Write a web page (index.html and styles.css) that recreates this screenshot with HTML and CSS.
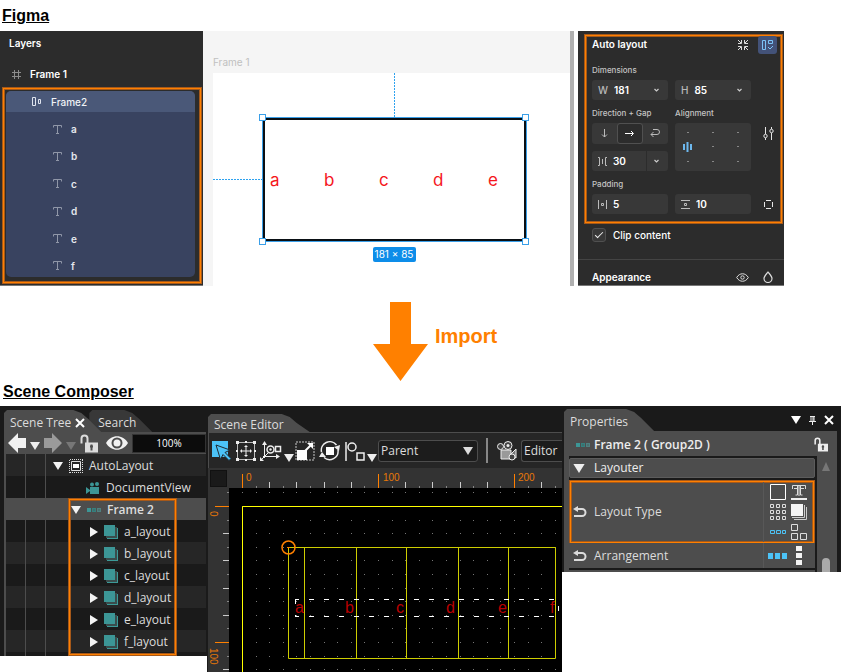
FILE: index.html
```html
<!DOCTYPE html>
<html lang="en">
<head>
<meta charset="utf-8">
<title>Figma import: auto layout</title>
<link rel="stylesheet" href="styles.css">
</head>
<body>
<svg class="defs" aria-hidden="true">
  <symbol id="text-t" viewBox="0 0 9 9"><path d="M.5 2.5V.5h8v2M4.5.5v8M3 8.5h3" fill="none" stroke="currentColor"/></symbol>
  <symbol id="chev" viewBox="0 0 7 5"><path d="M1.5 1 3.5 3l2-2" fill="none" stroke="currentColor" stroke-width="1.2"/></symbol>
  <symbol id="down" viewBox="0 0 10 8"><path d="M0 0h10L5 8z" fill="currentColor"/></symbol>
  <symbol id="right" viewBox="0 0 8 10"><path d="M0 0 8 5 0 10z" fill="currentColor"/></symbol>
  <symbol id="layer" viewBox="0 0 14 14"><path d="M11 3h3v11H3v-3" fill="#3c9a98"/><path d="M11 2h2v11H2v-2h9z" fill="#3a4c4c"/><path d="M0 0h11v11H0z" fill="#3c9696"/></symbol>
  <symbol id="group" viewBox="0 0 14 4"><path d="M0 0h4v4H0z" fill="#3c9696"/><path d="M5 0h4v4H5z" fill="#35807f"/><path d="M10 0h4v4h-4z" fill="#4f8080"/><path d="M7 1v2M12 1v2" stroke="#45605f"/></symbol>
  <symbol id="lock" viewBox="0 0 18 18"><path d="M1.500 9V4a3 3 0 0 1 6 0v5" fill="none" stroke="currentColor" stroke-width="2"/><path d="M5 8h13v10H5z" fill="currentColor"/><path d="M11.500 10v6M10 12h3" stroke="#4d4d4d" stroke-width="2"/></symbol>
  <symbol id="undo" viewBox="0 0 14 12"><path d="M4 3h5a3.500 3.500 0 0 1 0 7H1" fill="none" stroke="currentColor" stroke-width="2"/><path d="M0 3 5 0v6z" fill="currentColor"/></symbol>
</svg>

<h1 class="heading">Figma</h1>
<section class="figma">
  <nav class="layers">
    <h2 class="layers-title">Layers</h2>
    <div class="layer-frame">
      <svg width="9" height="9"><path d="M2.500 0v9M6.500 0v9M0 2.500h9M0 6.500h9" stroke="#8c8c8c" fill="none"/></svg>
      <span>Frame 1</span>
    </div>
    <div class="marked layers-marked">
      <div class="layer-group">
        <div class="layer-parent">
          <svg width="10" height="9"><path d="M.5.500h3v8h-3zM6.500 2.500h2v4h-2z" fill="none" stroke="#dfe4ee"/></svg>
          <span>Frame2</span>
        </div>
        <ul class="layer-list">
          <li><svg width="9" height="9"><use href="#text-t"/></svg>a</li>
          <li><svg width="9" height="9"><use href="#text-t"/></svg>b</li>
          <li><svg width="9" height="9"><use href="#text-t"/></svg>c</li>
          <li><svg width="9" height="9"><use href="#text-t"/></svg>d</li>
          <li><svg width="9" height="9"><use href="#text-t"/></svg>e</li>
          <li><svg width="9" height="9"><use href="#text-t"/></svg>f</li>
        </ul>
      </div>
    </div>
  </nav>

  <svg class="artboard" role="img" aria-label="Frame 1 canvas">
    <text class="art-label" x="10" y="35">Frame 1</text>
    <rect x="10" y="42" width="100%" height="100%" fill="#fff"/>
    <path d="M191.500 42v44M10 148.500h49" stroke="#2ea2ef" stroke-dasharray="2 1" fill="none"/>
    <rect x="61" y="88" width="261" height="121" fill="#fff" stroke="#0a0f14" stroke-width="2"/>
    <rect x="59.500" y="86.500" width="264" height="124" fill="none" stroke="#3a9fe8"/>
    <g class="art-text"><text x="67" y="155">a</text><text x="121" y="155">b</text><text x="176" y="155">c</text><text x="230" y="155">d</text><text x="285" y="155">e</text></g>
    <g fill="#fff" stroke="#3a9fe8"><rect x="56.500" y="83.500" width="6" height="6"/><rect x="319.500" y="83.500" width="6" height="6"/><rect x="56.500" y="207.500" width="6" height="6"/><rect x="319.500" y="207.500" width="6" height="6"/></g>
    <rect x="170" y="216" width="43" height="15" rx="2" fill="#0d8de9"/>
    <text class="art-size" x="191" y="227">181 × 85</text>
  </svg>
  <div class="art-scroll"></div>

  <form class="inspector">
    <div class="marked auto">
      <div class="auto-head">
        <h2>Auto layout</h2>
        <svg width="12" height="12"><path d="M1 1l3 3M1 4.500h3.500V1M11 1 8 4M11 4.500H7.500V1M1 11l3-3M1 7.500h3.500V11M11 11 8 8M11 7.500H7.500V11" stroke="#ddd" fill="none"/></svg>
        <button type="button" class="auto-toggle" aria-label="Toggle auto layout"><svg width="13" height="12"><path d="M1.500 1.500h3v9h-3zM7.500 1.500h4v3h-4zM7 8l2 2 3-3" stroke="#7cc4f8" fill="none"/></svg></button>
      </div>
      <div class="cap">Dimensions</div>
      <div class="pair">
        <label class="field"><span class="key">W</span><input value="181"><svg width="7" height="5"><use href="#chev"/></svg></label>
        <label class="field"><span class="key">H</span><input value="85"><svg width="7" height="5"><use href="#chev"/></svg></label>
      </div>
      <div class="pair caps"><span class="cap">Direction + Gap</span><span class="cap">Alignment</span></div>
      <div class="pair">
        <div class="stack">
          <div class="dirs">
            <button type="button" aria-label="Vertical"><svg width="9" height="9"><path d="M4.500 0v8M2 5.500 4.500 8 7 5.500" stroke="#bbb" fill="none"/></svg></button>
            <button type="button" class="on" aria-label="Horizontal"><svg width="11" height="9"><path d="M1 4.500h8M7 2l2.500 2.500L7 7" stroke="#fff" fill="none"/></svg></button>
            <button type="button" aria-label="Wrap"><svg width="10" height="9"><path d="M3 .5h4a2 2 0 0 1 0 5H1M3.500 3 1 5.500 3.500 8" stroke="#bbb" fill="none"/></svg></button>
          </div>
          <label class="field split"><svg width="9" height="9" aria-label="Gap"><path d="M0 .5h1.500v8H0M4.500 2v5M9 .5H7.500v8H9" stroke="#bbb" fill="none"/></svg><input value="30"><i></i><svg width="7" height="5"><use href="#chev"/></svg></label>
        </div>
        <div class="align">
          <span></span><span></span><span></span>
          <svg width="9" height="10"><path d="M1 2v6M4.500 0v10M8 2v6" stroke="#6db8ee" stroke-width="2"/></svg><span></span><span></span>
          <span></span><span></span><span></span>
        </div>
        <button type="button" class="plain" aria-label="Advanced settings"><svg width="11" height="13"><path d="M2.500 0v7M2.500 11v2M8.500 0v2M8.500 6v7" stroke="#e6e6e6"/><circle cx="2.500" cy="9" r="1.700" fill="none" stroke="#e6e6e6"/><circle cx="8.500" cy="4" r="1.700" fill="none" stroke="#e6e6e6"/></svg></button>
      </div>
      <div class="cap caps">Padding</div>
      <div class="pair">
        <label class="field"><svg width="9" height="9" aria-label="Horizontal padding"><path d="M.5 0v9M8.500 0v9M3.500 3.500h2v2h-2z" stroke="#bbb" fill="none"/></svg><input value="5"></label>
        <label class="field"><svg width="9" height="9" aria-label="Vertical padding"><path d="M0 .5h9M0 8.500h9M3.500 3.500h2v2h-2z" stroke="#bbb" fill="none"/></svg><input value="10"></label>
        <button type="button" class="plain" aria-label="Individual padding"><svg width="9" height="9"><path d="M2 .5h5M2 8.500h5M.5 2v5M8.500 2v5" stroke="#e6e6e6" fill="none"/></svg></button>
      </div>
    </div>
    <label class="clip"><input type="checkbox" checked>Clip content</label>
    <div class="appearance">
      <h2>Appearance</h2>
      <svg width="13" height="9"><path d="M.7 4.500C3.500-.5 9.500-.5 12.300 4.500 9.500 9.500 3.500 9.500.7 4.500z" fill="none" stroke="#ddd"/><circle cx="6.500" cy="4.500" r="1.700" fill="none" stroke="#ddd"/></svg>
      <svg width="10" height="12"><path d="M5 1C3 3.500 1 5.500 1 7.500a4 4 0 0 0 8 0C9 5.500 7 3.500 5 1z" fill="none" stroke="#ddd" stroke-width="1.200"/></svg>
    </div>
  </form>
</section>

<div class="import">
  <svg width="55" height="79"><path d="M17 0h21v42h17L27.500 79 0 42h17z" fill="#ff8000"/></svg>
  <strong>Import</strong>
</div>

<h1 class="heading heading-composer">Scene Composer</h1>
<section class="composer">
  <div class="tree">
    <div class="tabs">
      <div class="tab"><span>Scene Tree</span><svg width="10" height="10"><path d="M1 1l8 8M9 1 1 9" stroke="#fff" stroke-width="2"/></svg></div>
      <div class="tab tab-idle"><span>Search</span></div>
    </div>
    <div class="tree-tools">
      <button type="button" aria-label="Back"><svg width="18" height="20"><path d="M0 10 10 0v5h8v10h-8v5z" fill="#f2f2f2"/></svg></button>
      <svg class="low" width="10" height="8"><use href="#down"/></svg>
      <button type="button" aria-label="Forward"><svg width="18" height="20"><path d="M18 10 8 0v5H0v10h8v5z" fill="#9a9a9a"/></svg></button>
      <svg class="low dim" width="10" height="8"><use href="#down"/></svg>
      <button type="button" aria-label="Unlock"><svg width="18" height="19"><use href="#lock"/></svg></button>
      <button type="button" class="eye" aria-label="Visibility"><svg width="22" height="14"><path d="M0 7C5-2 17-2 22 7 17 16 5 16 0 7z" fill="#f2f2f2"/><circle cx="11" cy="7" r="5.500" fill="#4d4d4d"/><circle cx="11" cy="7" r="3.500" fill="#f2f2f2"/></svg></button>
      <input class="zoom" value="100%" aria-label="Zoom">
    </div>
    <ul class="rows">
      <li class="lv1"><svg width="10" height="8"><use href="#down"/></svg><svg width="14" height="14"><path d="M1 .5h13M1 13.500h13M.5 1v13M13.500 1v13" stroke="#ddd" stroke-dasharray="1 1"/><path d="M2.500 2.500h9v9h-9z" stroke="#ddd" fill="none"/><path d="M4 5h6v4H4z" fill="#fff"/></svg>AutoLayout</li>
      <li class="lv2"><svg width="14" height="12"><path d="M4 5h9v7H4zM0 5l4 3v1l-4 3z" fill="#3c9696"/><circle cx="6" cy="2.500" r="2" fill="#3c9696"/><circle cx="11" cy="2" r="2" fill="#3c9696"/></svg>DocumentView</li>
      <li class="lv2 sel"><svg width="10" height="8"><use href="#down"/></svg><svg width="14" height="4"><use href="#group"/></svg><b>Frame 2</b></li>
      <li class="lv3"><svg width="8" height="10"><use href="#right"/></svg><svg width="14" height="14"><use href="#layer"/></svg>a_layout</li>
      <li class="lv3"><svg width="8" height="10"><use href="#right"/></svg><svg width="14" height="14"><use href="#layer"/></svg>b_layout</li>
      <li class="lv3"><svg width="8" height="10"><use href="#right"/></svg><svg width="14" height="14"><use href="#layer"/></svg>c_layout</li>
      <li class="lv3"><svg width="8" height="10"><use href="#right"/></svg><svg width="14" height="14"><use href="#layer"/></svg>d_layout</li>
      <li class="lv3"><svg width="8" height="10"><use href="#right"/></svg><svg width="14" height="14"><use href="#layer"/></svg>e_layout</li>
      <li class="lv3"><svg width="8" height="10"><use href="#right"/></svg><svg width="14" height="14"><use href="#layer"/></svg>f_layout</li>
      <li class="marked tree-mark" aria-hidden="true"></li>
    </ul>
  </div>

  <div class="editor">
    <div class="tabs"><div class="tab tab-low"><span>Scene Editor</span></div></div>
    <div class="edit-tools">
      <button type="button" aria-label="Select"><svg width="20" height="20"><path d="M0 0h16v16H0z" fill="#4cc3f7"/><path d="M4 4l14 5-5 2.500 6 6-2 2-6-6-2.500 5z" fill="#4cc3f7" stroke="#202a30"/></svg></button>
      <button type="button" aria-label="Move"><svg width="20" height="20"><path d="M1.500 1.500h17v17h-17z" fill="none" stroke="#bbb"/><path d="M10 5v10M5 10h10" stroke="#eee"/><path d="M10 4l2 2H8zM10 16l2-2H8zM4 10l2-2v4zM16 10l-2-2v4z" fill="#eee"/><path d="M0 0h3v3H0zM17 0h3v3h-3zM0 17h3v3H0zM17 17h3v3h-3zM9 0h2v2H9zM9 18h2v2H9zM0 9h2v2H0zM18 9h2v2h-2z" fill="#eee"/></svg></button>
      <button type="button" aria-label="Axes"><svg width="22" height="20"><path d="M4.500 17V3M3 15.500h14M1 19l7-7" stroke="#eee" fill="none"/><path d="M4.500 0 7 4H2zM20 15.500 16 13v5zM0 20v-4l4 4z" fill="#eee"/><circle cx="10.500" cy="8.500" r="3.500" fill="none" stroke="#eee" stroke-width="1.500"/><circle cx="10.500" cy="8.500" r="1.200" fill="#eee"/><path d="M15.500 5.500h5v5h-5z" fill="none" stroke="#eee" stroke-width="1.500"/></svg></button>
      <svg class="low" width="10" height="8"><use href="#down"/></svg>
      <button type="button" aria-label="Scale"><svg width="20" height="20"><path d="M1 1h18v18H1z" fill="none" stroke="#777" stroke-dasharray="2 1" stroke-width="2"/><path d="M2 9h10v10H2z" fill="#fff"/><path d="M10 10l6-6" stroke="#fff" stroke-width="2"/><path d="M18 2v6l-6-6z" fill="#fff"/></svg></button>
      <button type="button" aria-label="Rotate"><svg width="22" height="20"><path d="M7 6h8v8H7z" fill="#fff"/><path d="M2.500 11a8.500 8.500 0 0 1 15-7M19 9A8.500 8.500 0 0 1 5 16.500" fill="none" stroke="#eee" stroke-width="1.500"/><path d="M21 4l-1 6-5-4zM0 16l3-5 4 5z" fill="#eee"/></svg></button>
      <button type="button" aria-label="Anchor"><svg width="20" height="20"><path d="M1 1v19" stroke="#eee" stroke-width="1.500"/><circle cx="7" cy="6" r="4" fill="none" stroke="#eee" stroke-width="1.500"/><path d="M12 12h7v7h-7z" fill="none" stroke="#eee" stroke-width="1.500"/></svg></button>
      <svg class="low" width="10" height="8"><use href="#down"/></svg>
      <span class="combo"><select aria-label="Coordinate space"><option>Parent</option></select><svg width="10" height="8"><use href="#down"/></svg></span>
      <i class="rule"></i>
      <svg width="20" height="20"><path d="M4 9h10v9H4z" fill="#999" stroke="#eee"/><path d="M14 13l5-5v9l-5-2z" fill="#777" stroke="#eee"/><circle cx="3.500" cy="5.500" r="3" fill="#444" stroke="#eee"/><circle cx="11" cy="4.500" r="4" fill="#444" stroke="#eee"/><circle cx="11" cy="4.500" r="1.500" fill="#eee"/><circle cx="15" cy="16" r="3" fill="#444" stroke="#eee"/></svg>
      <span class="combo combo-cut"><select aria-label="Camera"><option>Editor</option></select></span>
    </div>
    <svg class="scene" role="img" aria-label="Scene canvas">
      <rect width="100%" height="100%" fill="#000"/>
      <g id="dots" fill="#777"></g>
      <path d="M34.500 204V38.500H1200" stroke="#ffff00" fill="none"/>
      <path d="M80.500 79.500h267v111h-267zM96.500 79v111M148.500 79v111M198.500 79v111M250.500 79v111M300.500 79v111" stroke="#cdcd00" fill="none"/>
      <path d="M87 131.500h261M87 148.500h261" stroke="#fff" stroke-dasharray="5 10" stroke-dashoffset="1"/>
      <path d="M87.500 131v5M87.500 147v2M350.500 138v5" stroke="#fff"/>
      <g class="scene-text"><text x="87" y="145">a</text><text x="137" y="145">b</text><text x="188" y="145">c</text><text x="238" y="145">d</text><text x="290" y="145">e</text><text x="342" y="145">f</text></g>
      <circle cx="80.500" cy="79.500" r="6.500" fill="none" stroke="#ff8000" stroke-width="1.500"/>
      <path d="M79 79.500h3" stroke="#ff8000"/>
      <rect width="100%" height="20" fill="#333"/><rect width="21" height="100%" fill="#333"/>
      <rect x="2.500" y="2.500" width="16" height="16" fill="#1a1a1a" stroke="#111"/>
      <g id="ticks"></g>
      <g class="ruler-text"><text x="38" y="13">0</text><text x="175" y="13">100</text><text x="310" y="13">200</text><text transform="translate(2 43) rotate(90)">0</text><text transform="translate(2 180) rotate(90)">100</text></g>
    </svg>
  </div>

  <div class="props">
    <div class="tabs">
      <div class="tab"><span>Properties</span></div>
      <div class="win">
        <svg width="10" height="8"><use href="#down"/></svg>
        <svg width="7" height="9"><path d="M1 .5h5M0 5.500h7M3.500 5v4M2 1v4M5 1v4M4 1v4" stroke="#eee"/></svg>
        <svg width="10" height="10"><path d="M1 1l8 8M9 1 1 9" stroke="#fff" stroke-width="2"/></svg>
      </div>
    </div>
    <div class="props-body">
      <div class="props-title"><svg width="14" height="4"><use href="#group"/></svg><b>Frame 2 ( Group2D )</b><svg width="14" height="15"><use href="#lock"/></svg></div>
      <div class="props-scroll">
        <div class="props-main">
          <div class="props-group"><svg width="12" height="9"><use href="#down"/></svg>Layouter</div>
          <div class="marked prop prop-type">
            <svg width="14" height="12"><use href="#undo"/></svg><span>Layout Type</span>
            <div class="kinds">
              <svg width="16" height="16"><path d="M.5.500h15v15H.5z" fill="none" stroke="#fff"/></svg>
              <svg width="16" height="16"><path d="M1.500 5V1.500h13V5M6.500 2v9h-2M9.500 2v9h2M3 4.500h3M10 4.500h3" fill="none" stroke="#ddd"/><path d="M8 2v10" stroke="#999" stroke-width="2"/><path d="M0 15h16" stroke="#eee" stroke-width="2"/></svg>
              <svg width="16" height="16"><path d="M.5.500h3v3h-3zM6.500.500h3v3h-3zM12.500.500h3v3h-3zM.5 6.500h3v3h-3zM6.500 6.500h3v3h-3zM12.500 6.500h3v3h-3zM.5 12.500h3v3h-3zM6.500 12.500h3v3h-3zM12.500 12.500h3v3h-3z" fill="none" stroke="#ddd"/></svg>
              <svg width="16" height="16"><path d="M13.500 1v12.500H1M15.500 3v12.500H3" fill="none" stroke="#ccc"/><path d="M0 0h12v12H0z" fill="#f4f4f4"/></svg>
              <svg width="16" height="16"><path d="M.5 6.500h4v3h-4zM6.500 6.500h4v3h-4zM12.500 6.500h3v3h-3z" fill="none" stroke="#4cc3f7"/></svg>
              <svg width="16" height="16"><path d="M.5.500h6v6h-6zM.5 9.500h6v6h-6zM9.500 9.500h6v6h-6z" fill="none" stroke="#ddd"/></svg>
            </div>
          </div>
          <div class="prop">
            <svg width="14" height="12"><use href="#undo"/></svg><span>Arrangement</span>
            <div class="kinds kinds-row">
              <svg width="20" height="6"><path d="M0 0h5v6H0zM7 0h5v6H7zM14 0h5v6h-5z" fill="#4cc3f7"/></svg>
              <svg width="6" height="20"><path d="M0 0h6v5H0zM0 7h6v5H0zM0 14h6v5H0z" fill="#f4f4f4"/></svg>
            </div>
          </div>
          <div class="next-group"></div>
        </div>
        <div class="bar"><svg width="8" height="9"><path d="M4 0l4 9H0z" fill="#777"/></svg><i></i></div>
      </div>
    </div>
  </div>
</section>
<script src="script.js"></script>
</body>
</html>
```

FILE: styles.css
```css
* { box-sizing: border-box; }
body { margin: 0; background: #fff; font-family: "Liberation Sans", Arial, sans-serif; }
h1, h2, ul { margin: 0; padding: 0; }
ul { list-style: none; }
svg { flex: none; display: block; }
button { padding: 0; border: 0; background: none; color: inherit; display: flex; align-items: center; justify-content: center; }
input, select { font: inherit; color: inherit; min-width: 0; }
.defs { position: absolute; width: 0; height: 0; }

.heading { height: 31px; padding: 7px 2px 0; font-size: 16px; line-height: 18px; text-decoration: underline; color: #000; }
.heading-composer { height: 25px; padding: 2px 3px 0; }

.marked { border: 1px solid #ff8000; box-shadow: 0 0 0 1px #a6591a, inset 0 0 0 1px #a6591a; }

/* Figma window */
.figma { display: grid; grid-template-columns: 203px 1fr 4px 210px; width: calc(100% - 57px); height: 255px; font: 500 10px/12px Inter, sans-serif; color: #fff; }
.figma h2 { font-size: 10px; line-height: 12px; font-weight: 600; }
.layers { display: flex; flex-direction: column; background: #2c2c2c; border-bottom: 1px solid #777; }
.layers-title { padding: 6px 9px; }
.layer-frame { display: flex; align-items: center; gap: 9px; height: 32px; padding: 6px 12px 0; font-weight: 600; }
.layers-marked { flex: 1; margin: 1px 2px 2px 3px; padding: 2px 5px 5px 2px; }
.layer-group { height: 100%; display: flex; flex-direction: column; border-radius: 5px; overflow: hidden; background: #394360; }
.layer-parent { display: flex; align-items: center; gap: 9px; height: 21px; padding-left: 26px; background: #4a5878; color: #f0f2f6; }
.layer-list { flex: 1; display: flex; flex-direction: column; justify-content: space-between; padding-top: 6px; }
.layer-list li { display: flex; align-items: center; gap: 9px; height: 22px; padding-left: 47px; font-weight: 600; color: #e6e8ee; }
.layer-list svg { color: #9097a8; }

.artboard { width: 100%; height: 100%; background: #f5f5f5; }
.art-label { font-size: 10px; fill: #c0c0c0; font-weight: 400; }
.art-text { font-size: 17px; font-weight: 400; fill: #f5161c; }
.art-size { font-size: 10px; font-weight: 400; fill: #fff; text-anchor: middle; }
.art-scroll { background: #b0b0b0; }

.inspector { margin-left: 4px; background: #2c2c2c; border-bottom: 1px solid #777; padding: 4px 2px 0 7px; }
.auto { height: 188px; padding: 0 0 0 6px; }
.auto-head { display: grid; grid-template-columns: 1fr 12px 19px; gap: 9px; align-items: center; height: 18px; padding-right: 4px; }
.auto-head h2 { padding-bottom: 2px; }
.auto-toggle { height: 18px; border-radius: 3px; background: #435278; }
.cap { font-size: 8px; line-height: 12px; color: #c4c4c4; }
.auto > .cap { margin-top: 10px; }
.auto > .pair { margin-top: 4px; }
.auto > .caps { margin-top: 7px; }
.pair { display: grid; grid-template-columns: 76px 76px 20px; column-gap: 7px; align-items: start; }
.stack { display: grid; gap: 7px; }
.field { display: flex; align-items: center; gap: 6px; height: 20px; padding: 0 8px 0 6px; border-radius: 3px; background: #383838; }
.field input { width: 20px; flex: 1; padding: 0; border: 0; background: none; font-weight: 600; outline: 0; }
.key { color: #b8b8b8; }
.field > svg { color: #ccc; }
.split i { align-self: stretch; width: 1px; background: #2c2c2c; }
.dirs { display: grid; grid-template-columns: repeat(3, 1fr); height: 21px; border-radius: 3px; background: #383838; }
.dirs .on { border: 1px solid #505050; border-radius: 3px; background: #2c2c2c; }
.align { display: grid; grid-template-columns: repeat(3, 1fr); height: 48px; padding: 4px 0; border-radius: 3px; background: #383838; place-items: center; }
.align span { width: 2px; height: 1px; background: #888; }
.plain { width: 20px; height: 20px; }
.clip { display: flex; align-items: center; gap: 7px; height: 14px; margin: 5px 7px 0; }
.clip input { appearance: none; width: 14px; height: 14px; margin: 0; border: 1px solid #505050; border-radius: 3px; background: #383838; display: grid; place-items: center; }
.clip input::before { content: ""; width: 7px; height: 3px; border: solid #eee; border-width: 0 0 1px 1px; transform: rotate(-45deg); margin-bottom: 2px; }
.appearance { display: grid; grid-template-columns: 1fr 13px 10px; gap: 14px; align-items: center; margin: 17px -2px 0 -7px; padding: 11px 11px 0 14px; border-top: 1px solid #444; }

/* Import arrow */
.import { display: flex; align-items: center; gap: 7px; height: 95px; padding: 16px 0 0 373px; color: #ff8000; font-size: 20px; line-height: 24px; }
.import strong { margin-bottom: 12px; }

/* Scene Composer window */
.composer { display: grid; grid-template-columns: 207px 1fr 279px; align-items: start; font: 12px/16px "Open Sans", "Noto Sans", sans-serif; color: #dcdcdc; }
.tabs { display: flex; align-items: flex-end; }
.tab { display: flex; align-items: center; gap: 8px; height: 22px; padding: 3px 26px 0 6px; background: #4d4d4d; clip-path: polygon(0 3px, 3px 0, calc(100% - 28px) 0, calc(100% - 20px) 3px, calc(100% - 13px) 9px, 100% 100%, 0 100%); }
.tab-low { height: 18px; }
.tree .tab:first-child { gap: 4px; padding-right: 16px; z-index: 1; }
.tab-idle { background: #383838; padding: 3px 16px 0 9px; margin-left: -12px; }
.tree { background: #1a1a1a; padding: 4px 1px 0 4px; }
.tree-tools { display: flex; align-items: center; gap: 4px; height: 22px; padding-left: 4px; background: #4d4d4d; }
.eye { margin-left: 4px; }
.low { align-self: flex-end; margin-bottom: 4px; color: #eee; }
.edit-tools .low { margin: 0 -3px 6px -2px; }
.dim { color: #777; }
.zoom { flex: 1; height: 19px; padding: 0; border: 1px solid #333; background: #0c0c0c; color: #fff; text-align: center; font-size: 10px; }
.rows { position: relative; padding-bottom: 4px; border-left: 2px solid #4d4d4d; background: linear-gradient(90deg, transparent 19px, #4d4d4d 19px 20px, transparent 20px 39px, #4d4d4d 39px 40px, transparent 40px); }
.rows li:not(.marked) { display: flex; align-items: center; gap: 7px; height: 22px; padding-top: 2px; }
.rows li:nth-child(odd) { background: linear-gradient(90deg, #262626 19px, #4d4d4d 19px 20px, #262626 20px 39px, #4d4d4d 39px 40px, #262626 40px); }
.rows li:nth-child(even):not(.marked) { background: linear-gradient(90deg, #1a1a1a 19px, #4d4d4d 19px 20px, #1a1a1a 20px 39px, #4d4d4d 39px 40px, #1a1a1a 40px); }
.rows .sel.sel { background: #4d4d4d; }
.rows li.lv1 { padding-left: 47px; gap: 6px; }
.rows li.lv2 { padding-left: 80px; gap: 6px; }
.rows li.sel { padding-left: 65px; }
.rows li.lv3 { padding-left: 84px; gap: 6px; }
.rows svg { color: #f4f4f4; }
.rows .tree-mark { position: absolute; inset: 45px 30px 1px 63px; }

.editor { background: #1a1a1a; padding: 8px 0 0 1px; min-width: 0; overflow: hidden; }
.edit-tools { display: flex; align-items: center; gap: 4px; height: 36px; padding: 0 0 0 3px; border: solid #4d4d4d; border-width: 1px 0 0 1px; background: #262626; }
.combo { position: relative; display: flex; align-items: center; flex: none; width: 100px; height: 22px; border: 1px solid #4d4d4d; border-radius: 3px; background: #1c1c1c; }
.combo select { appearance: none; width: 100%; height: 20px; padding: 0 2px; border: 0; background: none; }
.combo svg { position: absolute; right: 4px; }
.combo-cut { flex: 1; border-right: 0; border-radius: 3px 0 0 3px; }
.rule { flex: none; width: 2px; height: 25px; margin: 0 5px 0 4px; background: #888; }
.scene { width: 100%; height: 204px; }
.scene-text { font: 16px "Liberation Sans", sans-serif; fill: #b80000; }
.ruler-text { font: 10px "Liberation Sans", sans-serif; fill: #e87808; }

.props { background: #1a1a1a; padding: 3px 4px 0 2px; }
.props .tabs { justify-content: space-between; }
.win { display: flex; gap: 8px; align-items: center; align-self: center; padding-right: 3px; color: #fff; }
.props-body { background: #4d4d4d; padding: 0 4px 0 5px; }
.props-title { display: flex; align-items: center; gap: 4px; height: 25px; padding: 2px 5px 0 7px; color: #eee; }
.props-title b { flex: 1; font-weight: 600; }
.rows b { font-weight: 600; }
.props-scroll { display: flex; gap: 2px; background: #1a1a1a; margin-right: -1px; }
.props-main { flex: 1; padding-top: 2px; }
.props-group { display: flex; align-items: center; gap: 9px; height: 20px; padding-left: 3px; border: 1px solid #5c5c5c; background: #4d4d4d; border-radius: 2px; color: #eee; }
.prop { display: flex; align-items: center; gap: 7px; height: 25px; padding-left: 4px; background: #4d4d4d; }
.prop span { flex: 1; }
.prop-type { height: 62px; margin: 3px 1px 0; padding-left: 2px; }
.kinds { display: grid; grid-template-columns: 16px 16px; gap: 4px 5px; align-self: stretch; align-content: center; padding: 0 6px 0 6px; border-left: 1px solid #585858; }
.kinds-row { grid-template-columns: 20px 6px; gap: 8px; align-items: center; padding: 0 13px 0 4px; }
.next-group { height: 2px; margin-top: 2px; background: #4d4d4d; }
.bar { display: flex; flex-direction: column; justify-content: space-between; align-items: center; width: 17px; padding-top: 6px; background: #4d4d4d; }
.bar i { width: 8px; height: 14px; border-radius: 4px 4px 0 0; background: #aaa; }
```

FILE: script.js
```js
// Ruler ticks and grid dots, one step per ten scene units.
const NS = "http://www.w3.org/2000/svg";
const ORIGIN_X = 34, ORIGIN_Y = 38, STEP = 13.6;
const dots = document.getElementById("dots");
const ticks = document.getElementById("ticks");

function box(parent, x, y, width, height, fill) {
  const r = document.createElementNS(NS, "rect");
  Object.entries({ x, y, width, height }).forEach(([k, v]) => r.setAttribute(k, v));
  if (fill) r.setAttribute("fill", fill);
  parent.appendChild(r);
}

function length(i) {
  return i % 10 === 0 ? 14 : i % 2 === 0 ? 6 : 2;
}
function colour(i) {
  return i % 10 === 0 ? "#ff8000" : i % 2 === 0 ? "#ccc" : "#888";
}

for (let i = 0; i < 90; i++) {
  const x = ORIGIN_X + Math.round(i * STEP);
  box(ticks, x, 20 - length(i), 1, length(i), colour(i));
  for (let j = -1; j < 13; j++) box(dots, x, ORIGIN_Y + Math.round(j * STEP), 1, 1);
}
for (let j = -1; j < 13; j++) {
  box(ticks, 21 - length(j), ORIGIN_Y + Math.round(j * STEP), length(j), 1, colour(j));
}
```
